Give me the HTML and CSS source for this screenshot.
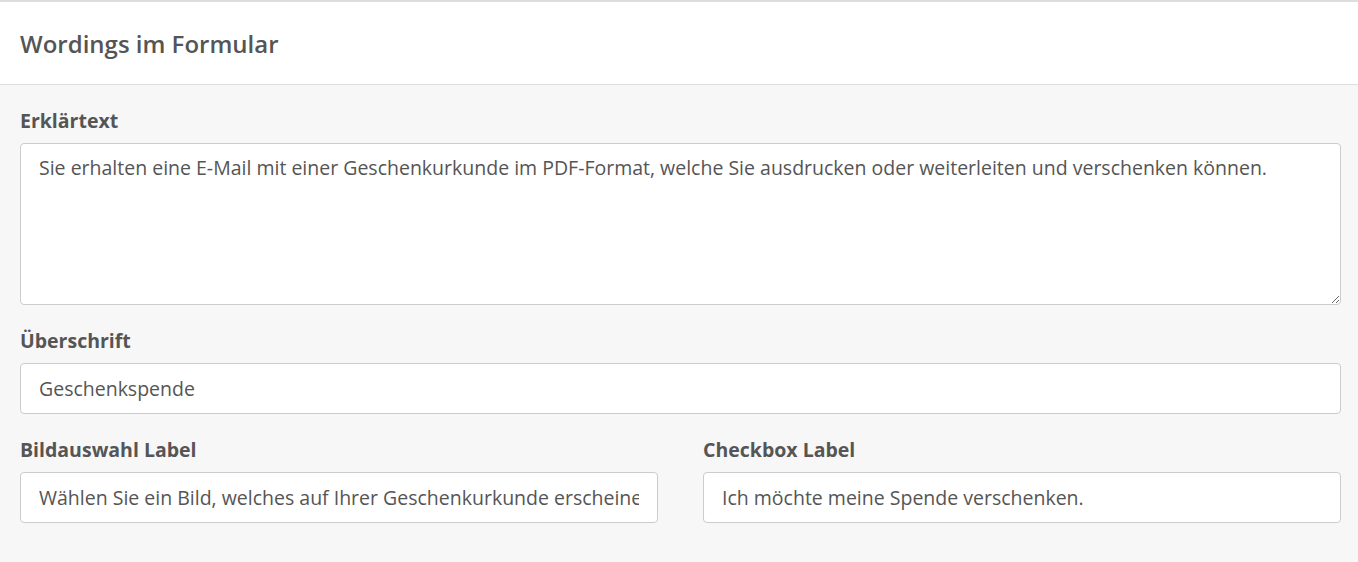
FILE: index.html
```html
<!DOCTYPE html>
<html lang="de">
<head>
  <meta charset="UTF-8">
  <title>Wordings im Formular</title>
  <link rel="stylesheet" href="styles.css">
</head>
<body>

<div class="panel">
  <div class="panel-heading">
    <h2>Wordings im Formular</h2>
  </div>

  <div class="panel-body">
    <div class="form-group">
      <label for="intro">Erklärtext</label>
      <textarea id="intro">Sie erhalten eine E-Mail mit einer Geschenkurkunde im PDF-Format, welche Sie ausdrucken oder weiterleiten und verschenken können.</textarea>
    </div>

    <div class="form-group">
      <label for="title">Überschrift</label>
      <input type="text" id="title" value="Geschenkspende">
    </div>

    <div class="form-row">
      <div class="form-group">
        <label for="imageLabel">Bildauswahl Label</label>
        <input type="text" id="imageLabel" value="Wählen Sie ein Bild, welches auf Ihrer Geschenkurkunde erscheinen soll.">
      </div>
      <div class="form-group">
        <label for="checkboxLabel">Checkbox Label</label>
        <input type="text" id="checkboxLabel" value="Ich möchte meine Spende verschenken.">
      </div>
    </div>
  </div>
</div>

</body>
</html>
```

FILE: styles.css
```css
body {
  margin: 0;
  font-family: 'Open Sans', sans-serif;
  background-color: #f7f7f7;
  color: #555;
}

.panel-heading {
  background-color: white;
  border-top: 2px solid #ddd;
  border-bottom: 1px solid #ddd;
  box-sizing: border-box;
  height: 85px;
  padding: 2px 20px 0;
  display: flex;
  align-items: center;
}

.panel-heading h2 {
  margin: 0;
  font-size: 24px;
  font-weight: 600;
  line-height: 34px;
  color: #555;
}

.panel-body {
  padding: 22px 17px 39px 20px;
}

.form-group {
  display: flex;
  flex-direction: column;
  margin-bottom: 22px;
}

.form-row .form-group {
  margin-bottom: 0;
}

.form-group label {
  font-size: 19.5px;
  font-weight: 700;
  line-height: 27px;
  margin-bottom: 9px;
}

.form-group input,
.form-group textarea {
  font-family: 'Open Sans', sans-serif;
  font-size: 19.5px;
  color: #555;
  background-color: white;
  border: 1px solid #ccc;
  border-radius: 4px;
  padding: 0 18px;
  box-sizing: border-box;
  margin: 0;
}

.form-group input {
  height: 51px;
}

.form-group textarea {
  height: 162px;
  padding-top: 10px;
  line-height: 27px;
  resize: vertical;
}

.form-row {
  display: grid;
  grid-template-columns: 1fr 1fr;
  gap: 45px;
}
```
